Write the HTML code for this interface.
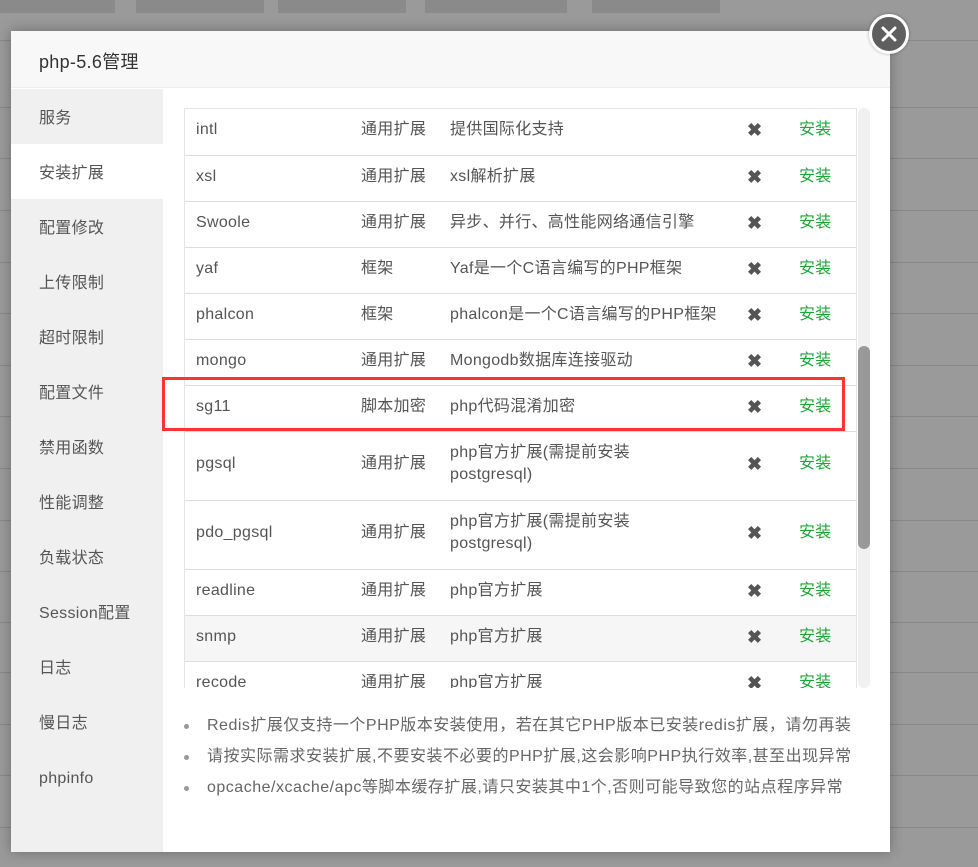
<!DOCTYPE html>
<html><head><meta charset="utf-8"><style>
*{margin:0;padding:0;box-sizing:border-box}
body{width:978px;height:867px;background:#9a9a9a;position:relative;overflow:hidden;font-family:"Liberation Sans","Noto Sans CJK SC",sans-serif;font-size:16px;color:#555}
.bgb{position:absolute;top:0;height:13px;background:#8a8a8a}
.ln{position:absolute;left:0;right:0;height:1px;background:#888}
.modal{position:absolute;left:11px;top:31px;width:879px;height:821px;background:#fff;box-shadow:0 0 12px rgba(0,0,0,.3)}
.hd{height:57px;background:#f8f8f8;border-bottom:1px solid #eee;padding:17px 0 0 28px;font-size:18px;color:#333;letter-spacing:.3px}
.side{position:absolute;left:0;top:58px;width:152px;bottom:0;background:#f0f0f0}
.side div{height:55px;line-height:55px;padding-left:28px;padding-top:2px;color:#555;letter-spacing:.3px}
.side .on{background:#fff}
.close{position:absolute;left:869px;top:14px;width:40px;height:40px;border-radius:50%;background:#5f5f5f;border:3px solid #fff;box-shadow:0 0 3px rgba(0,0,0,.3)}
.tw{position:absolute;left:173px;top:77px;width:673px;height:580px;overflow:hidden;border:1px solid #e4e4e4;border-bottom:none}
table{border-collapse:collapse;width:672px}
td{border-bottom:1px solid #ddd;height:46px;vertical-align:middle;color:#555;line-height:22px;padding-bottom:3px;letter-spacing:.3px}
td.n{padding-left:11px;width:176px}td.t{width:89px}td.d{width:297px}td.x{width:52px;text-align:left;color:#555;font-size:18px;font-weight:bold}td.i{color:#20a53a}
tr.g td{background:#f6f6f6}
.sb{position:absolute;left:847px;top:77px;width:12px;height:580px;background:#f1f1f1;border-radius:6px}
.th{position:absolute;left:847px;top:315px;width:12px;height:203px;background:#999;border-radius:6px}
.red{position:absolute;left:162px;top:377px;width:683px;height:54px;border:3px solid #f33}
ul{position:absolute;left:184px;top:713px;list-style:none}
li{height:31px;line-height:26px;color:#666;padding-left:23px;position:relative;white-space:nowrap;letter-spacing:.5px}
li:before{content:"";position:absolute;left:0;top:11px;width:5px;height:5px;border-radius:50%;background:#999}
</style></head><body>
<div class="bgb" style="left:0;width:115px"></div><div class="bgb" style="left:136px;width:128px"></div><div class="bgb" style="left:278px;width:128px"></div><div class="bgb" style="left:425px;width:142px"></div><div class="bgb" style="left:592px;width:128px"></div>
<div class="ln" style="top:40px"></div><div class="ln" style="top:107px"></div><div class="ln" style="top:158px"></div><div class="ln" style="top:210px"></div><div class="ln" style="top:262px"></div><div class="ln" style="top:313px"></div><div class="ln" style="top:365px"></div><div class="ln" style="top:416px"></div><div class="ln" style="top:468px"></div><div class="ln" style="top:520px"></div><div class="ln" style="top:571px"></div><div class="ln" style="top:622px"></div><div class="ln" style="top:672px"></div><div class="ln" style="top:724px"></div><div class="ln" style="top:775px"></div><div class="ln" style="top:827px"></div>
<div class="modal">
<div class="hd">php-5.6管理</div>
<div class="side"><div>服务</div><div class="on">安装扩展</div><div>配置修改</div><div>上传限制</div><div>超时限制</div><div>配置文件</div><div>禁用函数</div><div>性能调整</div><div>负载状态</div><div>Session配置</div><div>日志</div><div>慢日志</div><div>phpinfo</div></div>
<div class="tw"><table>
<tr><td class="n">intl</td><td class="t">通用扩展</td><td class="d">提供国际化支持</td><td class="x">✖</td><td class="i">安装</td></tr>
<tr><td class="n">xsl</td><td class="t">通用扩展</td><td class="d">xsl解析扩展</td><td class="x">✖</td><td class="i">安装</td></tr>
<tr><td class="n">Swoole</td><td class="t">通用扩展</td><td class="d">异步、并行、高性能网络通信引擎</td><td class="x">✖</td><td class="i">安装</td></tr>
<tr><td class="n">yaf</td><td class="t">框架</td><td class="d">Yaf是一个C语言编写的PHP框架</td><td class="x">✖</td><td class="i">安装</td></tr>
<tr><td class="n">phalcon</td><td class="t">框架</td><td class="d">phalcon是一个C语言编写的PHP框架</td><td class="x">✖</td><td class="i">安装</td></tr>
<tr><td class="n">mongo</td><td class="t">通用扩展</td><td class="d">Mongodb数据库连接驱动</td><td class="x">✖</td><td class="i">安装</td></tr>
<tr><td class="n">sg11</td><td class="t">脚本加密</td><td class="d">php代码混淆加密</td><td class="x">✖</td><td class="i">安装</td></tr>
<tr><td class="n" style="height:69px">pgsql</td><td class="t">通用扩展</td><td class="d">php官方扩展(需提前安装<br>postgresql)</td><td class="x">✖</td><td class="i">安装</td></tr>
<tr><td class="n" style="height:69px">pdo_pgsql</td><td class="t">通用扩展</td><td class="d">php官方扩展(需提前安装<br>postgresql)</td><td class="x">✖</td><td class="i">安装</td></tr>
<tr><td class="n">readline</td><td class="t">通用扩展</td><td class="d">php官方扩展</td><td class="x">✖</td><td class="i">安装</td></tr>
<tr class="g"><td class="n">snmp</td><td class="t">通用扩展</td><td class="d">php官方扩展</td><td class="x">✖</td><td class="i">安装</td></tr>
<tr><td class="n">recode</td><td class="t">通用扩展</td><td class="d">php官方扩展</td><td class="x">✖</td><td class="i">安装</td></tr>
</table></div>
<div class="sb"></div><div class="th"></div>
</div>
<div class="red"></div>
<ul style="position:absolute">
<li>Redis扩展仅支持一个PHP版本安装使用，若在其它PHP版本已安装redis扩展，请勿再装</li>
<li>请按实际需求安装扩展,不要安装不必要的PHP扩展,这会影响PHP执行效率,甚至出现异常</li>
<li>opcache/xcache/apc等脚本缓存扩展,请只安装其中1个,否则可能导致您的站点程序异常</li>
</ul>
<div class="close"><svg width="34" height="34" viewBox="0 0 34 34"><path d="M11 11L23 23M23 11L11 23" stroke="#fff" stroke-width="3" stroke-linecap="round"/></svg></div>
</body></html>
